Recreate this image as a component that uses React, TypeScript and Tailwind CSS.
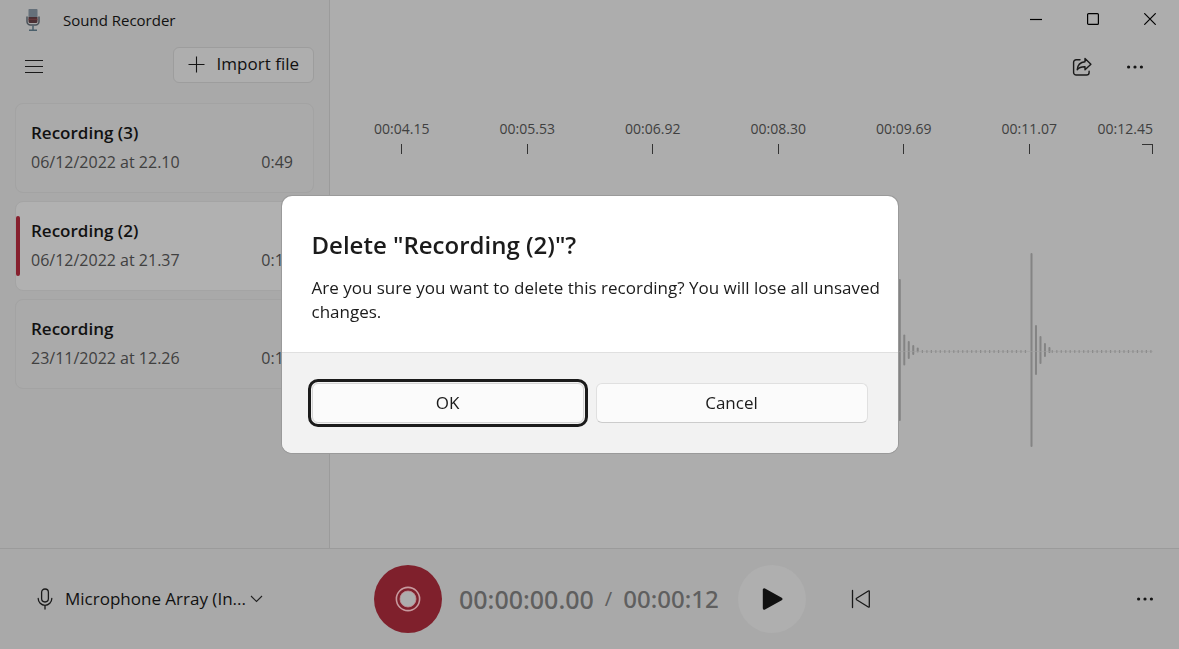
import React from "react";

type Recording = { name: string; date: string; length: string; selected?: boolean };

const recordings: Recording[] = [
  { name: "Recording (3)", date: "06/12/2022 at 22.10", length: "0:49" },
  { name: "Recording (2)", date: "06/12/2022 at 21.37", length: "0:12", selected: true },
  { name: "Recording", date: "23/11/2022 at 12.26", length: "0:12" },
];

const marks = ["00:04.15", "00:05.53", "00:06.92", "00:08.30", "00:09.69", "00:11.07"];

// Half-height of every audible bar, by index; all the others are silence.
const peaks: Record<number, number> = {
  0: 71, 1: 15.5, 2: 9, 3: 5, 4: 2.5,
  29.4: 97, 30.4: 25, 31.4: 14, 32.4: 7, 33.4: 3,
};

function AppLogo() {
  return (
    <svg width="16" height="24" viewBox="0 0 16 24" aria-hidden="true">
      <rect x="3.5" y="1" width="9" height="8.500" rx="0.800" fill="#65707a" />
      <path d="M3.500 9h9v4.500a1.500 1.500 0 0 1-1.500 1.500H5a1.500 1.500 0 0 1-1.500-1.500z" fill="#4a2f33" />
      <path d="M3.500 11.300h9" stroke="#6b3a3c" strokeWidth="1" />
      <path d="M2 8.500v5a3.500 3.500 0 0 0 3.500 3.500h5a3.500 3.500 0 0 0 3.500-3.500v-5" fill="none" stroke="#4a5259" strokeWidth="1.500" />
      <path d="M8 17.500V22M4 22.300h8" fill="none" stroke="#4a5f6b" strokeWidth="1.500" />
    </svg>
  );
}

function Dots() {
  return (
    <svg width="18" height="6" viewBox="0 0 18 6" fill="#151515" aria-hidden="true">
      <circle cx="2.6" cy="3" r="1.6" />
      <circle cx="9" cy="3" r="1.6" />
      <circle cx="15.4" cy="3" r="1.6" />
    </svg>
  );
}

function ShareIcon() {
  return (
    <svg width="20" height="20" viewBox="0 0 20 20" fill="none" stroke="#1a1a1a" strokeWidth="1.4" strokeLinecap="round" strokeLinejoin="round" aria-hidden="true">
      <path d="M8 2.700H4.200A2.600 2.600 0 0 0 1.600 5.300v10.100A2.600 2.600 0 0 0 4.200 18h10.300a2.600 2.600 0 0 0 2.600-2.600v-1.200" />
      <path d="M13 1.500l5.900 5.700-5.900 5.600V9.700c-3.400-.1-5.900.6-7.800 3 .3-4.300 3.100-7.500 7.800-8z" />
    </svg>
  );
}

function Waveform() {
  const quiet = Array.from({ length: 52 }, (_, i) => i + 5).filter((i) => i < 29 || i > 33);
  return (
    <svg className="h-[200px] w-[256px]" viewBox="898 251 256 200" aria-label="Waveform" role="img">
      <g stroke="#848484" strokeWidth="2" strokeLinecap="round">
        {Object.entries(peaks).map(([i, h]) => {
          const x = 899.8 + Number(i) * 4.48;
          return <line key={i} x1={x} x2={x} y1={351 - h} y2={351 + h - 2} />;
        })}
      </g>
      <g stroke="#767676" strokeWidth="1.3">
        {quiet.map((i) => {
          const x = 900 + i * 4.48;
          return <line key={i} x1={x} x2={x} y1={350.4} y2={352.6} />;
        })}
      </g>
      <line x1="898" x2="1153" y1="351.500" y2="351.500" stroke="#a0a0a0" strokeWidth="0.6" />
    </svg>
  );
}

export default function App() {
  return (
    <div className="flex min-h-screen flex-col bg-[#a9a9a9] font-['Open_Sans','Noto_Sans',sans-serif] text-[17px] leading-6 text-[#111]">
      <div className="flex flex-1">
        <aside className="flex w-[330px] shrink-0 flex-col border-r border-[#9b9b9b]">
          <header className="flex h-10 items-center gap-[22px] pl-[25px] text-[15px]">
            <AppLogo />
            <h1>Sound Recorder</h1>
          </header>
          <div className="flex items-center justify-between pt-[7px] pr-[15px] pl-6">
            <button aria-label="Menu" className="flex h-9 w-5 items-end justify-center pb-2">
              <svg width="20" height="16" viewBox="0 0 20 16" stroke="#1a1a1a" strokeWidth="1.1" aria-hidden="true">
                <path d="M1 1.500h18M1 7.500h18M1 13.500h18" />
              </svg>
            </button>
            <button className="flex h-9 items-center gap-3 rounded-md border border-[#9d9d9d] bg-[#aeaeae] px-3.5 pb-0.5">
              <svg width="17" height="17" viewBox="0 0 17 17" stroke="#151515" strokeWidth="1.1" aria-hidden="true">
                <path d="M8.500 0.500v16M0.500 8.500h16" />
              </svg>
              Import file
            </button>
          </div>
          <ul className="flex flex-col gap-2 pt-5 pr-[15px] pl-[15px]">
            {recordings.map((r) => (
              <li key={r.name}>
                <button
                  aria-current={r.selected}
                  className={
                    r.selected
                      ? "relative block h-[90px] w-full rounded-lg border border-[#a4a4a4] bg-[#b1b1b1] pr-5 pb-0.5 pl-[15px] text-left"
                      : "relative block h-[90px] w-full rounded-lg border border-[#a3a3a3] bg-[#aaaaaa] pr-5 pb-0.5 pl-[15px] text-left"
                  }
                >
                  {r.selected && <span className="absolute top-[14px] left-0 h-[60px] w-1 rounded-full bg-[#86202e]" />}
                  <span className="block pb-[5px] font-semibold">{r.name}</span>
                  <span className="flex justify-between text-base text-[#404040]">
                    <span>{r.date}</span>
                    <span>{r.length}</span>
                  </span>
                </button>
              </li>
            ))}
          </ul>
        </aside>

        <main className="flex flex-1 flex-col bg-[#adadad]">
          <div className="flex h-[38px] justify-end pr-px">
            <button aria-label="Minimize" className="flex w-[57px] items-center justify-center">
              <svg width="12" height="12" viewBox="0 0 12 12" stroke="#000" strokeWidth="1.2"><path d="M0 6.500h12" /></svg>
            </button>
            <button aria-label="Maximize" className="flex w-[57px] items-center justify-center">
              <svg width="12" height="12" viewBox="0 0 12 12" fill="none" stroke="#000" strokeWidth="1.2"><rect x="0.600" y="0.600" width="10.800" height="10.800" rx="1" /></svg>
            </button>
            <button aria-label="Close" className="flex w-[57px] items-center justify-center">
              <svg width="12" height="12" viewBox="0 0 12 12" stroke="#000" strokeWidth="1.2"><path d="M0.300 0.300l11.400 11.400M11.700 0.300L0.300 11.700" /></svg>
            </button>
          </div>
          <div className="flex justify-end gap-[13px] pt-[9px] pr-6">
            <button aria-label="Share" className="flex h-10 w-10 items-center justify-center"><ShareIcon /></button>
            <button aria-label="More options" className="flex h-10 w-10 items-center justify-center"><Dots /></button>
          </div>
          <div className="flex pt-[32px] pr-[26px] pl-[9px] text-sm leading-5 text-[#404040]">
            {marks.map((m) => (
              <div key={m} className="flex flex-1 flex-col items-center gap-[5px]">
                <span>{m}</span>
                <span className="h-[10px] w-px bg-[#333]" />
              </div>
            ))}
            <div className="flex w-[61px] flex-col items-end gap-[5px]">
              <span>00:12.45</span>
              <span className="h-[10px] w-[11px] border-t border-r border-[#333]" />
            </div>
          </div>
          <div className="flex flex-1 items-center justify-end pr-[25px]">
            <Waveform />
          </div>
        </main>
      </div>

      <footer className="flex h-[101px] items-center border-t border-[#9b9b9b] pr-[25px] pl-9">
        <button className="flex w-[338px] items-center">
          <svg width="18" height="22" viewBox="0 0 18 22" fill="none" stroke="#1a1a1a" strokeWidth="1.3" strokeLinecap="round" aria-hidden="true">
            <rect x="5.600" y="1" width="6.800" height="13" rx="3.400" />
            <path d="M2.200 10.500a6.800 6.800 0 0 0 13.600 0M9 17.400V21" />
          </svg>
          <span className="pr-1 pl-[11px]">Microphone Array (In...</span>
          <svg width="13" height="8" viewBox="0 0 13 8" fill="none" stroke="#222" strokeWidth="1.100" aria-hidden="true">
            <path d="M1 1l5.500 5.500L12 1" />
          </svg>
        </button>
        <button aria-label="Record" className="flex h-[68px] w-[68px] items-center justify-center rounded-full bg-[#7f202c]">
          <svg width="26" height="26" viewBox="0 0 26 26" aria-hidden="true">
            <circle cx="13" cy="13" r="11.600" fill="none" stroke="#c79a9f" strokeWidth="1.600" />
            <circle cx="13" cy="13" r="8" fill="#adadad" stroke="#c08e94" strokeWidth="0.800" />
          </svg>
        </button>
        <div className="flex w-[296px] items-center gap-[11px] pl-[17px] font-['Noto_Sans',sans-serif] font-medium text-[#5f5f5f]">
          <span className="text-[25px]">00:00:00.00</span>
          <span className="text-xl font-normal">/</span>
          <span className="text-2xl">00:00:12</span>
        </div>
        <button aria-label="Play" className="flex h-[68px] w-[68px] items-center justify-center rounded-full bg-[#afafaf]">
          <svg width="24" height="24" viewBox="0 0 24 24" aria-hidden="true">
            <path d="M4.300 2.800v18.400L21 12z" fill="#111" stroke="#111" strokeWidth="3" strokeLinejoin="round" />
          </svg>
        </button>
        <button aria-label="Skip back" className="ml-[35px] flex h-10 w-10 items-center justify-center">
          <svg width="20" height="20" viewBox="0 0 20 20" fill="none" stroke="#1a1a1a" strokeWidth="1.300" strokeLinejoin="round" strokeLinecap="round" aria-hidden="true">
            <path d="M1.500 1.500v17M17.300 2q1-.6 1 .6v14.800q0 1.200-1 .6L5.600 10.700q-.8-.7 0-1.400z" />
          </svg>
        </button>
        <button aria-label="Playback options" className="ml-auto"><Dots /></button>
      </footer>

      <div className="fixed inset-0 flex items-center justify-center">
        <div role="dialog" aria-modal="true" aria-labelledby="dialog-title" className="w-[616px] overflow-hidden rounded-[10px] bg-white text-[#1b1b1b] shadow-[0_0_0_1px_#9a9a9a]">
          <div className="pt-[31px] pr-3 pb-7 pl-[30px]">
            <h2 id="dialog-title" className="pb-[13px] text-2xl leading-9 font-semibold">Delete "Recording (2)"?</h2>
            <p>Are you sure you want to delete this recording? You will lose all unsaved changes.</p>
          </div>
          <div className="grid grid-cols-2 gap-3 border-t border-[#e0e0e0] bg-[#f2f2f2] p-[30px]">
            <button className="h-10 rounded-md border border-[#d5d5d5] bg-[#fbfbfb] outline-[3px] outline-offset-1 outline-[#1b1b1b]">OK</button>
            <button className="h-10 rounded-md border border-[#e0e0e0] border-b-[#cccccc] bg-[#fbfbfb]">Cancel</button>
          </div>
        </div>
      </div>
    </div>
  );
}
